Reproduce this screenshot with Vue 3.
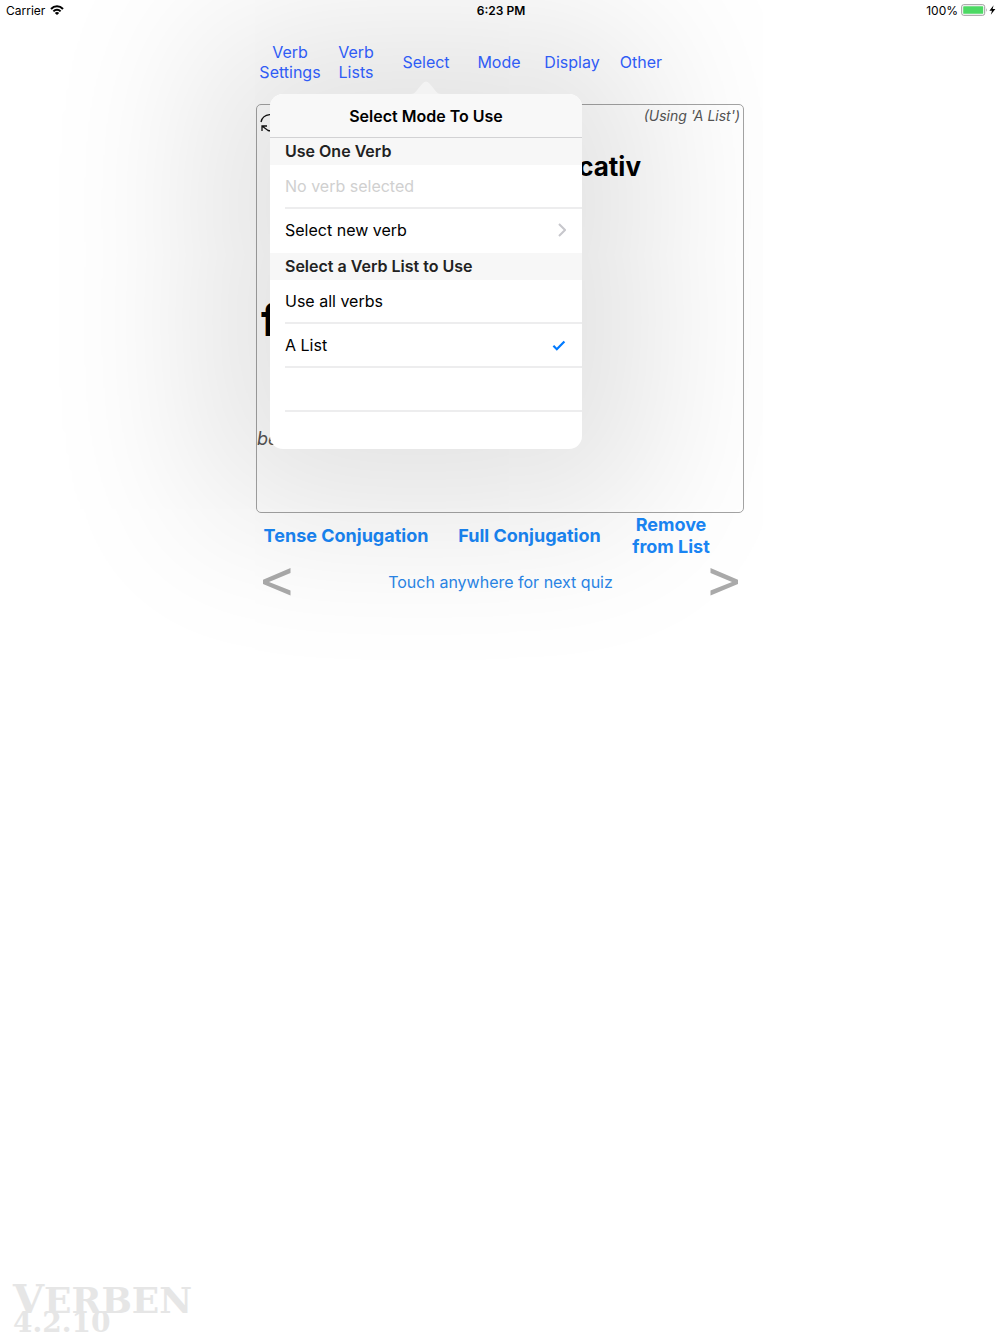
<script setup>
import { ref } from 'vue';

const menu = ['Verb Settings', 'Verb Lists', 'Select', 'Mode', 'Display', 'Other'];
const lists = ['Use all verbs', 'A List'];
const active = ref('A List');
</script>

<template>
  <div class="screen">
    <header class="status">
      <span class="status__left">
        Carrier
        <svg width="14" height="10" viewBox="0 0 14 10" aria-hidden="true">
          <g fill="none" stroke="#000" stroke-width="2">
            <path d="M1 4 C4.4 .3 9.6 .3 13 4" />
            <path d="M3.4 6.3 C5.4 4.1 8.6 4.1 10.6 6.3" />
          </g>
          <path d="M7 10 L4.8 7.9 C6 6.8 8 6.8 9.2 7.9 Z" />
        </svg>
      </span>
      <span class="status__time">6:23 PM</span>
      <span class="status__right">
        100%
        <svg width="35" height="12" viewBox="0 0 35 12" aria-hidden="true">
          <rect x=".7" y=".7" width="23" height="10.6" rx="2" fill="#fff" stroke="#9b9b9b" />
          <rect x="2.2" y="2.2" width="20" height="7.6" rx=".6" fill="#4cd964" />
          <path d="M25 4 q1.6 2 0 4z" fill="#9b9b9b" />
          <path d="M32.6 1.2 L28.4 6.8 h2.6 L29.8 10.8 L34.4 5.1 h-2.8 z" />
        </svg>
      </span>
    </header>

    <main class="quiz">
      <nav class="menu">
        <div v-for="item in menu" :key="item" class="menu__item">
          <button class="menu__button" type="button">{{ item }}</button>
          <section v-if="item === 'Select'" class="popover">
            <svg class="popover__arrow" width="30" height="13" viewBox="0 0 30 13" aria-hidden="true">
              <path d="M0 13 C4 13 5 10 12 2 Q15 -1 18 2 C25 10 26 13 30 13 Z" fill="#f3f3f3" />
            </svg>
            <div class="popover__body">
              <h2 class="popover__title">Select Mode To Use</h2>
              <h3 class="popover__section">Use One Verb</h3>
              <ul class="rows">
                <li><button class="row" type="button" disabled>No verb selected</button></li>
                <li>
                  <button class="row" type="button">
                    Select new verb
                    <svg width="8" height="14" viewBox="0 0 8 14" aria-hidden="true">
                      <path d="M1 1 L7 7 L1 13" fill="none" stroke="#c7c7cc" stroke-width="2" />
                    </svg>
                  </button>
                </li>
              </ul>
              <h3 class="popover__section">Select a Verb List to Use</h3>
              <ul class="rows">
                <li v-for="name in lists" :key="name">
                  <button class="row" type="button" @click="active = name">
                    {{ name }}
                    <svg v-if="active === name" width="14" height="11" viewBox="0 0 14 11" aria-hidden="true">
                      <path d="M1.4 5.8 L4.8 9.2 L12.4 1.4" fill="none" stroke="#007aff" stroke-width="2.2" />
                    </svg>
                  </button>
                </li>
                <li class="row"></li>
                <li class="row row--cut"></li>
              </ul>
            </div>
          </section>
        </div>
      </nav>

      <article class="card">
        <div class="card__top">
          <svg width="22" height="20" viewBox="0 0 22 20" fill="none" stroke="#111" stroke-width="1.3" aria-hidden="true">
            <path d="M1 9 A10 9 0 0 1 20 7 M2 18 V13 H7 M2 13 L8 17.5 A10 9 0 0 0 20 12" />
          </svg>
          <em class="card__using">(Using 'A List')</em>
        </div>
        <h1 class="card__tense">cativ</h1>
        <p class="card__verb">f</p>
        <p class="card__hint">be</p>
      </article>

      <div class="actions">
        <button type="button">Tense Conjugation</button>
        <button type="button">Full Conjugation</button>
        <button type="button">Remove<br />from List</button>
      </div>

      <div class="pager">
        <button type="button" aria-label="Previous">
          <svg width="28" height="28" viewBox="0 0 28 28" aria-hidden="true">
            <path d="M27.5 0 V5 L6 14 L27.5 22.5 V27.5 L0 16 V11.8 Z" fill="#aaa" />
          </svg>
        </button>
        <button class="pager__next" type="button">Touch anywhere for next quiz</button>
        <button type="button" aria-label="Next">
          <svg width="28" height="28" viewBox="0 0 28 28" aria-hidden="true">
            <path d="M.5 0 V5 L22 14 L.5 22.5 V27.5 L28 16 V11.8 Z" fill="#aaa" />
          </svg>
        </button>
      </div>
    </main>

    <footer class="brand">
      <div class="brand__name"><span>V</span>ERBEN</div>
      <div class="brand__version">4.2.10</div>
    </footer>
  </div>
</template>

<style>
body {
  margin: 0;
  background: #fff;
}
</style>

<style scoped>
.screen {
  min-height: 100vh;
  display: flex;
  flex-direction: column;
  overflow: hidden;
  font-family: Inter, 'Liberation Sans', sans-serif;
  color: #000;
}

button {
  padding: 0;
  border: 0;
  background: none;
  font: inherit;
  color: inherit;
  cursor: pointer;
}

h1,
h2,
h3,
p,
ul {
  margin: 0;
  padding: 0;
}

ul {
  list-style: none;
}

svg {
  flex: none;
}

.status {
  position: relative;
  z-index: 2;
  display: grid;
  grid-template-columns: 1fr auto 1fr;
  align-items: center;
  height: 20px;
  padding: 0 4px 0 6px;
  font-size: 12px;
}

.status__left,
.status__right {
  display: flex;
  align-items: center;
  gap: 5px;
}

.status__right {
  justify-content: flex-end;
  gap: 3px;
}

.status__time {
  font-weight: 600;
}

.quiz {
  width: 100%;
  max-width: 488px;
  margin: 0 auto;
}

.menu {
  display: grid;
  grid-template-columns: 68fr 64fr 76fr 70fr 76fr 62fr 72fr;
  align-items: center;
  height: 84px;
}

.menu__item {
  position: relative;
  display: flex;
  justify-content: center;
}

.menu__button {
  position: relative;
  z-index: 2;
  font-size: 16px;
  line-height: 20px;
  color: #2f5cf5;
}

.popover {
  position: absolute;
  z-index: 1;
  top: 29px;
  left: 50%;
  width: 312px;
  margin-left: -156px;
}

.popover__arrow {
  display: block;
  position: relative;
  z-index: 1;
  margin: 0 auto;
}

.popover__body {
  border-radius: 13px;
  background: #fff;
  box-shadow: 0 0 160px 70px rgba(0, 0, 0, 0.115);
}

.popover__title {
  height: 44px;
  box-sizing: border-box;
  border-bottom: 1px solid #d2d2d4;
  border-radius: 13px 13px 0 0;
  background: #f8f8f8;
  font-size: 16px;
  font-weight: 600;
  line-height: 44px;
  text-align: center;
}

.popover__section {
  padding-left: 15px;
  background: #f7f7f7;
  font-size: 16px;
  font-weight: 600;
  line-height: 27px;
  color: #222;
}

.rows {
  padding-left: 15px;
}

.row {
  display: flex;
  align-items: center;
  justify-content: space-between;
  width: 100%;
  height: 44px;
  box-sizing: border-box;
  padding-right: 16px;
  border-bottom: 2px solid #ededee;
  font-size: 16px;
}

.row:disabled {
  color: #d0d0d0;
}

li:last-child > .row,
.row--cut {
  border-bottom-color: transparent;
}

.row--cut {
  height: 37px;
}

.card {
  height: 409px;
  box-sizing: border-box;
  border: 1px solid #a4a4a4;
  border-radius: 5px;
}

.card__top {
  display: flex;
  justify-content: space-between;
  padding: 0 3px;
}

.card__top svg {
  margin-top: 8px;
}

.card__using {
  font-size: 14px;
  line-height: 22px;
  color: #555;
}

.card__tense {
  margin: 18px 102px 0 0;
  font-size: 26px;
  font-weight: 700;
  line-height: 32px;
  text-align: right;
}

.card__verb {
  margin: 109px 0 0 4px;
  font-size: 44px;
  font-weight: 700;
  line-height: 56px;
}

.card__hint {
  margin-top: 80px;
  font-size: 18px;
  font-style: italic;
  line-height: 22px;
  color: #555;
}

.actions {
  display: grid;
  grid-template-columns: 180fr 187fr 96fr 25fr;
  height: 46px;
  font-size: 18px;
  font-weight: 700;
  line-height: 22px;
  color: #1a86f5;
}

.pager {
  display: flex;
  align-items: center;
  justify-content: space-between;
  height: 46px;
  padding: 0 6px 0 7px;
}

.pager svg {
  display: block;
}

.pager__next {
  font-size: 16px;
  color: #2a86e8;
}

.brand {
  margin-top: auto;
  padding-left: 13px;
  font-family: 'DejaVu Serif', 'Liberation Serif', serif;
  font-weight: 700;
  color: #e6e6e6;
}

.brand__name {
  font-size: 36px;
  line-height: 24px;
}

.brand__name span {
  font-size: 40px;
}

.brand__version {
  font-size: 28px;
  line-height: 22px;
}
</style>
